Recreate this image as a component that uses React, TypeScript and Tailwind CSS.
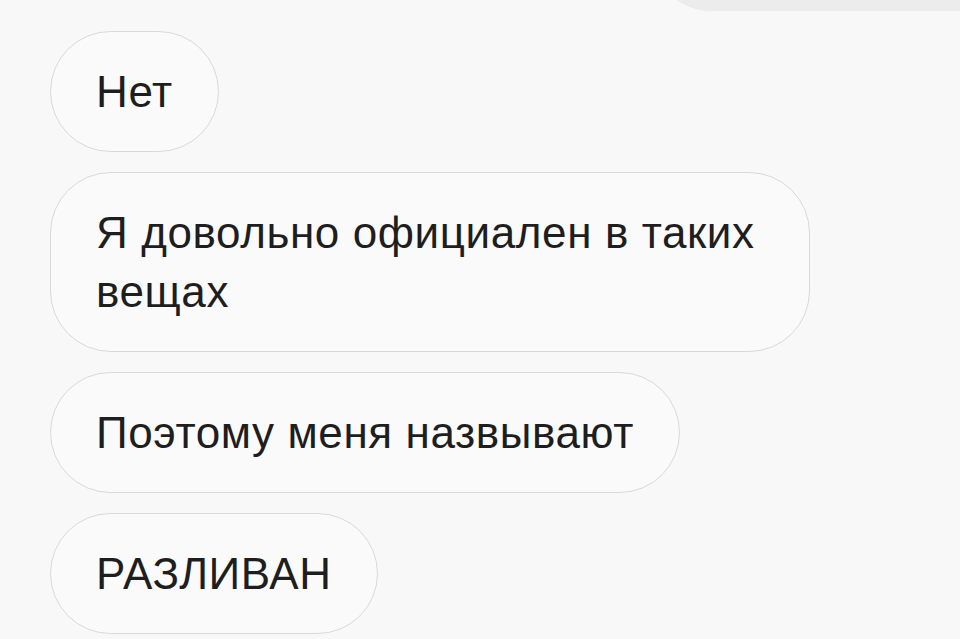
const messages = [
  "Нет",
  "Я довольно официален в таких вещах",
  "Поэтому меня назвывают",
  "РАЗЛИВАН",
];

function Bubble({ text }: { text: string }) {
  return (
    <div className="max-w-[760px] rounded-[61px] border-[1.5px] border-[#d9d9d9] bg-[#fafafa] px-[45px] py-[30px] text-[44px] leading-[59px] tracking-[0.6px] text-[#1e1e1e]">
      {text}
    </div>
  );
}

export default function App() {
  return (
    <div
      className="flex h-[639px] w-full flex-col items-start gap-5 overflow-hidden bg-[#f8f8f8] px-[50px]"
      style={{ fontFamily: '"Liberation Sans", Arial, sans-serif' }}
    >
      {/* own message, mostly scrolled out of view */}
      <div className="-mr-[60px] -mt-[110px] h-[121px] w-[319px] shrink-0 self-end rounded-l-[61px] bg-[#ececec]" />
      {messages.map((m) => (
        <Bubble key={m} text={m} />
      ))}
    </div>
  );
}
